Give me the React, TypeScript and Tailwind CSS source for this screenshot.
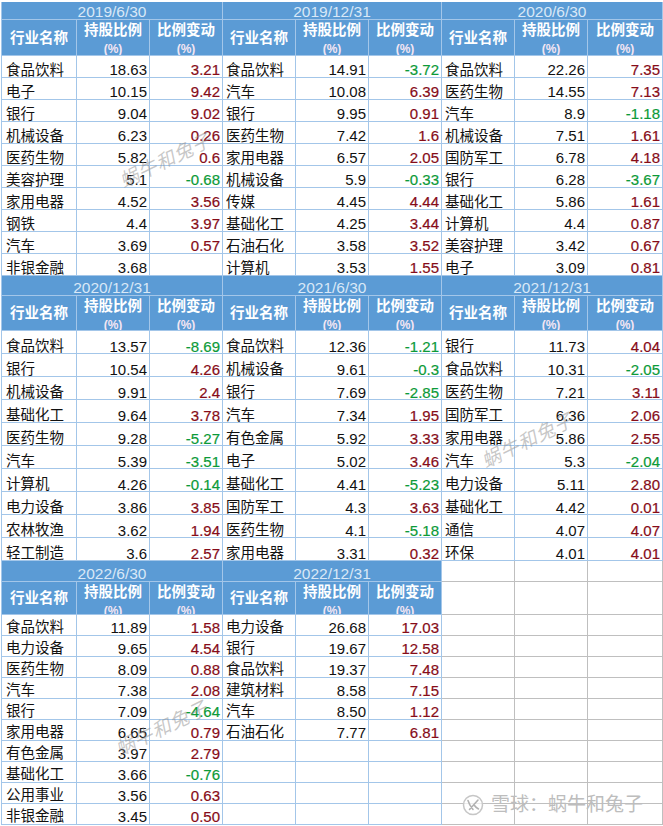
const FONT = '"Liberation Sans", "Noto Sans CJK SC", sans-serif';

type Row = [string, string, string];
type Table = { title: string; rows: Row[] };

const row1: Table[] = [
  {
    title: '2019/6/30',
    rows: [
      ['食品饮料', '18.63', '3.21'],
      ['电子', '10.15', '9.42'],
      ['银行', '9.04', '9.02'],
      ['机械设备', '6.23', '0.26'],
      ['医药生物', '5.82', '0.6'],
      ['美容护理', '5.1', '-0.68'],
      ['家用电器', '4.52', '3.56'],
      ['钢铁', '4.4', '3.97'],
      ['汽车', '3.69', '0.57'],
      ['非银金融', '3.68', ''],
    ],
  },
  {
    title: '2019/12/31',
    rows: [
      ['食品饮料', '14.91', '-3.72'],
      ['汽车', '10.08', '6.39'],
      ['银行', '9.95', '0.91'],
      ['医药生物', '7.42', '1.6'],
      ['家用电器', '6.57', '2.05'],
      ['机械设备', '5.9', '-0.33'],
      ['传媒', '4.45', '4.44'],
      ['基础化工', '4.25', '3.44'],
      ['石油石化', '3.58', '3.52'],
      ['计算机', '3.53', '1.55'],
    ],
  },
  {
    title: '2020/6/30',
    rows: [
      ['食品饮料', '22.26', '7.35'],
      ['医药生物', '14.55', '7.13'],
      ['汽车', '8.9', '-1.18'],
      ['机械设备', '7.51', '1.61'],
      ['国防军工', '6.78', '4.18'],
      ['银行', '6.28', '-3.67'],
      ['基础化工', '5.86', '1.61'],
      ['计算机', '4.4', '0.87'],
      ['美容护理', '3.42', '0.67'],
      ['电子', '3.09', '0.81'],
    ],
  },
];

const row2: Table[] = [
  {
    title: '2020/12/31',
    rows: [
      ['食品饮料', '13.57', '-8.69'],
      ['银行', '10.54', '4.26'],
      ['机械设备', '9.91', '2.4'],
      ['基础化工', '9.64', '3.78'],
      ['医药生物', '9.28', '-5.27'],
      ['汽车', '5.39', '-3.51'],
      ['计算机', '4.26', '-0.14'],
      ['电力设备', '3.86', '3.85'],
      ['农林牧渔', '3.62', '1.94'],
      ['轻工制造', '3.6', '2.57'],
    ],
  },
  {
    title: '2021/6/30',
    rows: [
      ['食品饮料', '12.36', '-1.21'],
      ['机械设备', '9.61', '-0.3'],
      ['银行', '7.69', '-2.85'],
      ['汽车', '7.34', '1.95'],
      ['有色金属', '5.92', '3.33'],
      ['电子', '5.02', '3.46'],
      ['基础化工', '4.41', '-5.23'],
      ['国防军工', '4.3', '3.63'],
      ['医药生物', '4.1', '-5.18'],
      ['家用电器', '3.31', '0.32'],
    ],
  },
  {
    title: '2021/12/31',
    rows: [
      ['银行', '11.73', '4.04'],
      ['食品饮料', '10.31', '-2.05'],
      ['医药生物', '7.21', '3.11'],
      ['国防军工', '6.36', '2.06'],
      ['家用电器', '5.86', '2.55'],
      ['汽车', '5.3', '-2.04'],
      ['电力设备', '5.11', '2.80'],
      ['基础化工', '4.42', '0.01'],
      ['通信', '4.07', '4.07'],
      ['环保', '4.01', '4.01'],
    ],
  },
];

const row3: Table[] = [
  {
    title: '2022/6/30',
    rows: [
      ['食品饮料', '11.89', '1.58'],
      ['电力设备', '9.65', '4.54'],
      ['医药生物', '8.09', '0.88'],
      ['汽车', '7.38', '2.08'],
      ['银行', '7.09', '-4.64'],
      ['家用电器', '6.65', '0.79'],
      ['有色金属', '3.97', '2.79'],
      ['基础化工', '3.66', '-0.76'],
      ['公用事业', '3.56', '0.63'],
      ['非银金融', '3.45', '0.50'],
    ],
  },
  {
    title: '2022/12/31',
    rows: [
      ['电力设备', '26.68', '17.03'],
      ['银行', '19.67', '12.58'],
      ['食品饮料', '19.37', '7.48'],
      ['建筑材料', '8.58', '7.15'],
      ['汽车', '8.50', '1.12'],
      ['石油石化', '7.77', '6.81'],
      ['', '', ''],
      ['', '', ''],
      ['', '', ''],
      ['', '', ''],
    ],
  },
];

const cols = ['grid-cols-[75px_73px_73px]', 'grid-cols-[73px_73px_73px]', 'grid-cols-[73px_73px_75px]'];

type Sizes = { titleH: string; headH: string; rowH: string; rowPad: string };

function Block({ title, rows, col, titleH, headH, rowH, rowPad }: Table & Sizes & { col: number }) {
  return (
    <div className={`grid ${cols[col]} shrink-0`}>
      <div className={`${titleH} col-span-3 flex items-end justify-center overflow-hidden border-r border-b border-[#a3c6e9] bg-[#5b9bd5] text-[15.5px] leading-[15px] text-[#d9e8f7]`}>
        {title}
      </div>

      <div className={`${headH} flex items-center justify-center overflow-hidden border-r border-b border-[#a3c6e9] bg-[#5b9bd5] pt-[2px] text-[14.5px] font-bold text-white`}>行业名称</div>
      {['持股比例', '比例变动'].map((h) => (
        <div key={h} className={`${headH} flex flex-col items-center overflow-hidden border-r border-b border-[#a3c6e9] bg-[#5b9bd5] text-[14.5px] leading-[20px] font-bold text-white`}>
          <span className="h-[19px]">{h}</span>
          <span className="text-[12px] text-[#f4e6f3]">(%)</span>
        </div>
      ))}

      {rows.map((r, i) => (
        <div key={i} className="contents">
          <div className={`${rowH} ${rowPad} ${col === 0 ? 'pl-[4px]' : 'pl-[3px]'} flex items-center overflow-hidden border-r border-b border-[#a3c6e9] text-[14.5px] text-[#111]`}>{r[0]}</div>
          <div className={`${rowH} ${rowPad} flex items-center justify-end overflow-hidden border-r border-b border-[#a3c6e9] pr-[2px] text-[15px] text-[#111]`}>{r[1]}</div>
          <div className={`${rowH} ${rowPad} flex items-center justify-end overflow-hidden border-r border-b border-[#a3c6e9] pr-[2px] text-[15px] [-webkit-text-stroke:0.2px] ${r[2].startsWith('-') ? 'text-[#0c9a38]' : 'text-[#860c18]'}`}>{r[2]}</div>
        </div>
      ))}
    </div>
  );
}

function EmptyBlock() {
  const cell = 'border-r border-b border-[#bfbfbf]';
  return (
    <div className={`grid ${cols[2]} shrink-0`}>
      {[0, 1, 2].map((i) => <div key={`t${i}`} className={`h-[21px] ${cell}`} />)}
      {[0, 1, 2].map((i) => <div key={`h${i}`} className={`h-[33px] ${cell}`} />)}
      {Array.from({ length: 30 }).map((_, i) => <div key={i} className={`h-[21px] ${cell}`} />)}
    </div>
  );
}

function Watermark({ className }: { className: string }) {
  return (
    <div className={`absolute -rotate-[26deg] text-[19px] leading-[26px] tracking-[1px] whitespace-nowrap text-[#8f8f8f]/50 italic ${className}`}>
      蜗牛和兔子
    </div>
  );
}

export default function App() {
  return (
    <div className="relative h-[826px] w-[663px] overflow-hidden bg-white" style={{ fontFamily: FONT }}>
      <div className="pt-[2px] pl-[1px]">
        <div className="flex border-l border-[#a3c6e9]">
          {row1.map((b, i) => (
            <Block key={b.title} {...b} col={i} titleH="h-[18px]" headH="h-[36px]" rowH="h-[22px]" rowPad="pt-[8px]" />
          ))}
        </div>
        <div className="flex border-l border-[#a3c6e9]">
          {row2.map((b, i) => (
            <Block key={b.title} {...b} col={i} titleH="h-[20px]" headH="h-[35px]" rowH="h-[23px]" rowPad="pt-[10px]" />
          ))}
        </div>
        <div className="flex border-l border-[#a3c6e9]">
          {row3.map((b, i) => (
            <Block key={b.title} {...b} col={i} titleH="h-[21px]" headH="h-[33px]" rowH="h-[21px]" rowPad="pt-[6px]" />
          ))}
          <EmptyBlock />
        </div>
      </div>

      <Watermark className="left-[116px] top-[148px]" />
      <Watermark className="left-[478px] top-[428px]" />
      <Watermark className="left-[112px] top-[716px]" />

      {/* xueqiu mark */}
      <div className="absolute left-[462px] top-[794px] flex items-center gap-[7px] text-[19px] leading-[22px] whitespace-nowrap text-[#bdbdbd]">
        <svg width="22" height="22" viewBox="0 0 22 22" fill="none">
          <circle cx="11" cy="11" r="9.5" fill="#ffffff" fillOpacity="0.7" stroke="#c6c6c6" strokeWidth="1.5" />
          <path d="M6 6.5c1 3.5 2.5 6 5 9M16 6l-8.5 9.5M12.5 11.5c1 1.5 2 2.5 4 3.5" stroke="#b2b2b2" strokeWidth="1.6" strokeLinecap="round" />
        </svg>
        <span>雪球：蜗牛和兔子</span>
      </div>
    </div>
  );
}
